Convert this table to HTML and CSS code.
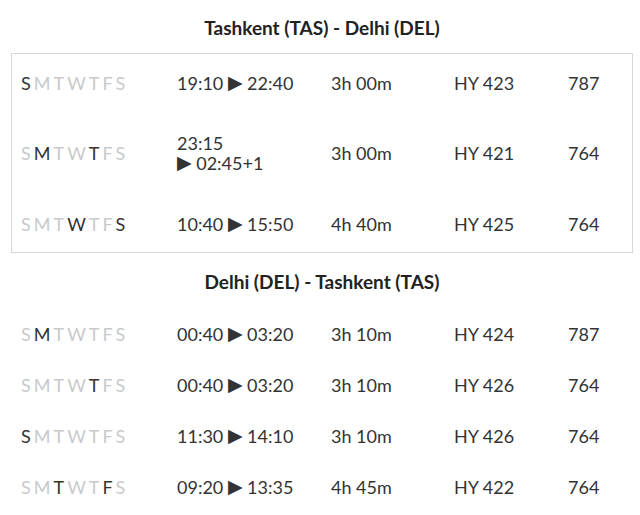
FILE: index.html
```html
<!DOCTYPE html>
<html lang="en">
<head>
<meta charset="utf-8">
<title>Flight schedule</title>
<link rel="stylesheet" href="styles.css">
</head>
<body>
<div class="page">
  <section class="route">
    <h2 class="route-title">Tashkent (TAS) - Delhi (DEL)</h2>
    <div class="schedule schedule--boxed">
      <div class="flight">
        <div class="days"><span class="on">S</span><span>M</span><span>T</span><span>W</span><span>T</span><span>F</span><span>S</span></div>
        <div class="time">19:10 <span class="arrow">▶</span> 22:40</div>
        <div class="dur">3h 00m</div>
        <div class="num">HY 423</div>
        <div class="craft">787</div>
      </div>
      <div class="flight flight--tall">
        <div class="days"><span>S</span><span class="on">M</span><span>T</span><span>W</span><span class="on">T</span><span>F</span><span>S</span></div>
        <div class="time time--wrap">23:15<br><span class="arrow">▶</span> 02:45+1</div>
        <div class="dur">3h 00m</div>
        <div class="num">HY 421</div>
        <div class="craft">764</div>
      </div>
      <div class="flight">
        <div class="days"><span>S</span><span>M</span><span>T</span><span class="on">W</span><span>T</span><span>F</span><span class="on">S</span></div>
        <div class="time">10:40 <span class="arrow">▶</span> 15:50</div>
        <div class="dur">4h 40m</div>
        <div class="num">HY 425</div>
        <div class="craft">764</div>
      </div>
    </div>
  </section>
  <section class="route route--return">
    <h2 class="route-title">Delhi (DEL) - Tashkent (TAS)</h2>
    <div class="schedule">
      <div class="flight flight--compact">
        <div class="days"><span>S</span><span class="on">M</span><span>T</span><span>W</span><span>T</span><span>F</span><span>S</span></div>
        <div class="time">00:40 <span class="arrow">▶</span> 03:20</div>
        <div class="dur">3h 10m</div>
        <div class="num">HY 424</div>
        <div class="craft">787</div>
      </div>
      <div class="flight flight--compact">
        <div class="days"><span>S</span><span>M</span><span>T</span><span>W</span><span class="on">T</span><span>F</span><span>S</span></div>
        <div class="time">00:40 <span class="arrow">▶</span> 03:20</div>
        <div class="dur">3h 10m</div>
        <div class="num">HY 426</div>
        <div class="craft">764</div>
      </div>
      <div class="flight flight--compact">
        <div class="days"><span class="on">S</span><span>M</span><span>T</span><span>W</span><span>T</span><span>F</span><span>S</span></div>
        <div class="time">11:30 <span class="arrow">▶</span> 14:10</div>
        <div class="dur">3h 10m</div>
        <div class="num">HY 426</div>
        <div class="craft">764</div>
      </div>
      <div class="flight flight--compact">
        <div class="days"><span>S</span><span>M</span><span class="on">T</span><span>W</span><span>T</span><span class="on">F</span><span>S</span></div>
        <div class="time">09:20 <span class="arrow">▶</span> 13:35</div>
        <div class="dur">4h 45m</div>
        <div class="num">HY 422</div>
        <div class="craft">764</div>
      </div>
    </div>
  </section>
</div>
</body>
</html>
```
FILE: styles.css
```css
body {
  margin: 0;
  background: #fff;
  color: #333;
  font-family: Lato, "Open Sans", sans-serif;
}

.page {
  margin-left: 11px;
  width: 622px;
}

.route-title {
  margin: 16px 0 13px;
  font-size: 19px;
  line-height: 24px;
  font-weight: 700;
  text-align: center;
  color: #222;
}

.route--return .route-title {
  margin-top: 17px;
}

.schedule {
  border: 1px solid transparent;
}

.schedule--boxed {
  border-color: #d6d6d6;
}

.flight {
  display: grid;
  grid-template-columns: 156px 154px 123px 114px 1fr;
  align-items: center;
  padding-left: 9px;
  height: 57px;
  font-size: 18px;
  line-height: 20px;
  color: #333;
}

.flight--tall {
  height: 84px;
}

.flight--compact {
  height: 51px;
}

.days {
  display: flex;
  gap: 3px;
  color: #c8cacc;
}

.days .on {
  color: #333;
}

.time--wrap {
  line-height: 20px;
}

.arrow {
  font-family: "DejaVu Sans", sans-serif;
  font-size: 19px;
  line-height: 1;
  vertical-align: 1px;
  color: #333;
}
```
